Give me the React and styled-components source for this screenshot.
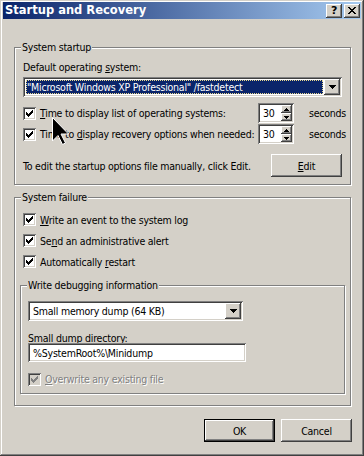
import React from 'react';
import styled, { createGlobalStyle, css } from 'styled-components';

const FONT = `"DejaVu Sans Condensed", "Liberation Sans", sans-serif`;

const Global = createGlobalStyle`
  html, body { margin: 0; padding: 0; background: #D4D0C8; }
  body { font-family: ${FONT}; font-size: 10.5px; letter-spacing: -0.22px; color: #000; }
  * { box-sizing: border-box; }
`;

const sunken = css`
  box-shadow: inset 1px 1px #808080, inset -1px -1px #fff, inset 2px 2px #404040, inset -2px -2px #D4D0C8;
`;
const raised = css`
  box-shadow: inset -1px -1px #404040, inset 1px 1px #fff, inset -2px -2px #808080, inset 2px 2px #D4D0C8;
`;

const Window = styled.div`
  position: relative;
  width: 364px;
  height: 456px;
  padding: 2px 3px 3px;
  display: flex;
  flex-direction: column;
  background: #D4D0C8;
  box-shadow: inset -1px -1px #404040, inset 1px 1px #D4D0C8, inset -2px -2px #808080, inset 2px 2px #fff;
`;

const TitleBar = styled.div`
  height: 17px;
  flex: none;
  display: flex;
  align-items: center;
  justify-content: space-between;
  padding: 0 1px 0 2px;
  background: linear-gradient(to right, #0A246A, #A6CAF0);
`;

const Title = styled.span`
  color: #fff;
  font-family: "DejaVu Sans", sans-serif;
  font-weight: bold;
  font-size: 11.5px;
  letter-spacing: 0;
  line-height: 13px;
`;

const TitleButtons = styled.div`
  display: flex;
  gap: 2px;
`;

const TitleBtn = styled.div`
  width: 16px;
  height: 14px;
  background: #D4D0C8;
  ${raised};
  display: flex;
  align-items: center;
  justify-content: center;
  font-family: "DejaVu Sans", sans-serif;
  font-weight: bold;
  font-size: 11px;
  line-height: 11px;
  padding-bottom: 1px;
`;

const Body = styled.div`
  display: flex;
  flex-direction: column;
  padding: 28px 10px 0 11px;
`;

const Group = styled.div`
  position: relative;
  display: flex;
  flex-direction: column;
  border: 1px solid #808080;
  box-shadow: inset 1px 1px #fff, 1px 1px #fff;
  margin-top: ${p => p.$mt || 0}px;
  padding: ${p => p.$pad};
`;

const Legend = styled.span`
  position: absolute;
  top: -7px;
  left: ${p => p.$left}px;
  padding: 0 1px;
  line-height: 13px;
  background: #D4D0C8;
  white-space: nowrap;
`;

const Label = styled.div`
  line-height: 13px;
  white-space: nowrap;
  margin-top: ${p => p.$mt || 0}px;
  color: ${p => (p.$disabled ? '#808080' : '#000')};
  text-shadow: ${p => (p.$disabled ? '1px 1px #fff' : 'none')};
`;

const Combo = styled.div`
  width: ${p => p.$w}px;
  height: 20px;
  flex: none;
  margin-top: ${p => p.$mt || 0}px;
  background: #fff;
  ${sunken};
  padding: 2px;
  display: flex;
`;

const ComboText = styled.div`
  flex: 1;
  min-width: 0;
  display: flex;
  align-items: center;
  white-space: nowrap;
  overflow: hidden;
  padding-left: ${p => (p.$selected ? 1 : 3)}px;
  margin: ${p => (p.$selected ? '1px' : '0')};
  background: ${p => (p.$selected ? '#0A246A' : 'transparent')};
  color: ${p => (p.$selected ? '#fff' : '#000')};
  outline: ${p => (p.$selected ? '1px dotted #E8D890' : 'none')};
  outline-offset: -1px;
`;

const ArrowBtn = styled.div`
  width: 16px;
  height: 16px;
  flex: none;
  background: #D4D0C8;
  ${raised};
  display: flex;
  align-items: center;
  justify-content: center;
`;

const SpinRow = styled.div`
  display: grid;
  grid-template-columns: 17px 218px 36px auto;
  align-items: center;
  height: 20px;
  margin-top: ${p => p.$mt || 0}px;
  white-space: nowrap;
`;

const Seconds = styled.span`
  margin-left: 15px;
  line-height: 13px;
`;

const Spin = styled.div`
  width: 36px;
  height: 20px;
  background: #fff;
  ${sunken};
  padding: 2px;
  display: flex;
`;

const SpinVal = styled.div`
  flex: 1;
  display: flex;
  align-items: center;
  padding-left: 3px;
`;

const SpinBtns = styled.div`
  width: 11px;
  display: flex;
  flex-direction: column;
`;

const SpinBtn = styled.div`
  flex: 1;
  background: #D4D0C8;
  ${raised};
  display: flex;
  align-items: center;
  justify-content: center;
`;

const EditRow = styled.div`
  display: flex;
  align-items: center;
  justify-content: space-between;
  margin-top: 10px;
  height: 23px;
  white-space: nowrap;
`;

const Btn = styled.button`
  width: 71px;
  height: 23px;
  padding: 0;
  border: none;
  font-family: ${FONT};
  font-size: 10.5px;
  letter-spacing: -0.22px;
  color: #000;
  background: #D4D0C8;
  ${raised};
  ${p =>
    p.$default &&
    css`
      box-shadow: inset 0 0 0 1px #000, inset -2px -2px #404040, inset 2px 2px #fff, inset -3px -3px #808080,
        inset 3px 3px #D4D0C8;
    `}
`;

const CheckRow = styled.div`
  display: flex;
  align-items: center;
  gap: 4px;
  height: ${p => p.$h || 21}px;
  padding-left: ${p => p.$pl ?? 3}px;
  margin-top: ${p => p.$mt || 0}px;
  white-space: nowrap;
`;

const Box = styled.span`
  width: 13px;
  height: 13px;
  flex: none;
  background: ${p => (p.$disabled ? '#D4D0C8' : '#fff')};
  ${sunken};
  display: flex;
  align-items: center;
  justify-content: center;
`;

const TextBox = styled.div`
  width: ${p => p.$w}px;
  height: 19px;
  margin-top: ${p => p.$mt || 0}px;
  background: #fff;
  ${sunken};
  padding: 0 0 0 5px;
  display: flex;
  align-items: center;
  white-space: nowrap;
`;

const Footer = styled.div`
  display: flex;
  justify-content: flex-end;
  gap: 6px;
  margin-top: 13px;
  margin-right: -1px;
`;

const Cursor = styled.svg`
  position: absolute;
  left: 52px;
  top: 117px;
`;

const Check = ({ disabled }) => (
  <Box $disabled={disabled}>
    <svg width="7" height="7" viewBox="0 0 7 7" shapeRendering="crispEdges">
      <path
        d="M6 0h1v3h-1v1h-1v1h-1v1h-1v1h-1v-1h-1v-1h-1v-3h1v1h1v1h1v-1h1v-1h1z"
        fill={disabled ? '#808080' : '#000'}
      />
    </svg>
  </Box>
);

const Down = ({ w = 7 }) => (
  <svg width={w} height="4" viewBox="0 0 7 4" shapeRendering="crispEdges">
    <path d="M0 0h7v1h-1v1h-1v1h-1v1h-1v-1h-1v-1h-1v-1h-1z" fill="#000" />
  </svg>
);

const Tiny = ({ up }) => (
  <svg width="5" height="3" viewBox="0 0 5 3" shapeRendering="crispEdges">
    <path d={up ? 'M2 0h1v1h1v1h1v1h-5v-1h1v-1h1z' : 'M0 0h5v1h-1v1h-1v1h-1v-1h-1v-1h-1z'} fill="#000" />
  </svg>
);

const Spinner = ({ value }) => (
  <Spin>
    <SpinVal>{value}</SpinVal>
    <SpinBtns>
      <SpinBtn><Tiny up /></SpinBtn>
      <SpinBtn><Tiny /></SpinBtn>
    </SpinBtns>
  </Spin>
);

export default function App() {
  return (
    <>
      <Global />
      <Window>
        <TitleBar>
          <Title>Startup and Recovery</Title>
          <TitleButtons>
            <TitleBtn>?</TitleBtn>
            <TitleBtn>
              <svg width="8" height="7" viewBox="0 0 8 7" shapeRendering="crispEdges">
                <path
                  d="M0 0h2v1h1v1h2v-1h1v-1h2v1h-1v1h-1v1h-1v1h1v1h1v1h1v1h-2v-1h-1v-1h-2v1h-1v1h-2v-1h1v-1h1v-1h1v-1h-1v-1h-1v-1h-1z"
                  fill="#000"
                />
              </svg>
            </TitleBtn>
          </TitleButtons>
        </TitleBar>
        <Body>
          <Group $pad="13px 8px 7px 8px">
            <Legend $left={6}>System startup</Legend>
            <Label>
              Default operating <u>s</u>ystem:
            </Label>
            <Combo $w={319} $mt={3}>
              <ComboText $selected>"Microsoft Windows XP Professional" /fastdetect</ComboText>
              <ArrowBtn><Down /></ArrowBtn>
            </Combo>
            <SpinRow $mt={6}>
              <Check />
              <span>
                <u>T</u>ime to display list of operating systems:
              </span>
              <Spinner value="30" />
              <Seconds>seconds</Seconds>
            </SpinRow>
            <SpinRow $mt={1}>
              <Check />
              <span>
                Time to <u>d</u>isplay recovery options when needed:
              </span>
              <Spinner value="30" />
              <Seconds>seconds</Seconds>
            </SpinRow>
            <EditRow>
              <span>To edit the startup options file manually, click Edit.</span>
              <Btn>
                <u>E</u>dit
              </Btn>
            </EditRow>
          </Group>

          <Group $mt={12} $pad="11px 5px 11px 5px">
            <Legend $left={6}>System failure</Legend>
            <CheckRow>
              <Check />
              <span>
                <u>W</u>rite an event to the system log
              </span>
            </CheckRow>
            <CheckRow>
              <Check />
              <span>
                Se<u>n</u>d an administrative alert
              </span>
            </CheckRow>
            <CheckRow>
              <Check />
              <span>
                Automatically <u>r</u>estart
              </span>
            </CheckRow>

            <Group $mt={13} $pad="15px 7px 4px 7px">
              <Legend $left={6}>Write debugging information</Legend>
              <Combo $w={215}>
                <ComboText>Small memory dump (64 KB)</ComboText>
                <ArrowBtn><Down /></ArrowBtn>
              </Combo>
              <Label $mt={11}>Small dump directory:</Label>
              <TextBox $w={218} $mt={-2}>%SystemRoot%\Minidump</TextBox>
              <CheckRow $mt={7} $h={20} $pl={0}>
                <Check disabled />
                <Label $disabled>
                  <u>O</u>verwrite any existing file
                </Label>
              </CheckRow>
            </Group>
          </Group>

          <Footer>
            <Btn $default>OK</Btn>
            <Btn>Cancel</Btn>
          </Footer>
        </Body>
        <Cursor width="18" height="29" viewBox="0 0 18 29">
          <path
            d="M0.5 0.5 L0.5 24 L6 18.5 L10.5 27.5 L13.5 26 L9 17 L16.5 17 Z"
            fill="#000"
            stroke="#fff"
            strokeWidth="1"
          />
        </Cursor>
      </Window>
    </>
  );
}
